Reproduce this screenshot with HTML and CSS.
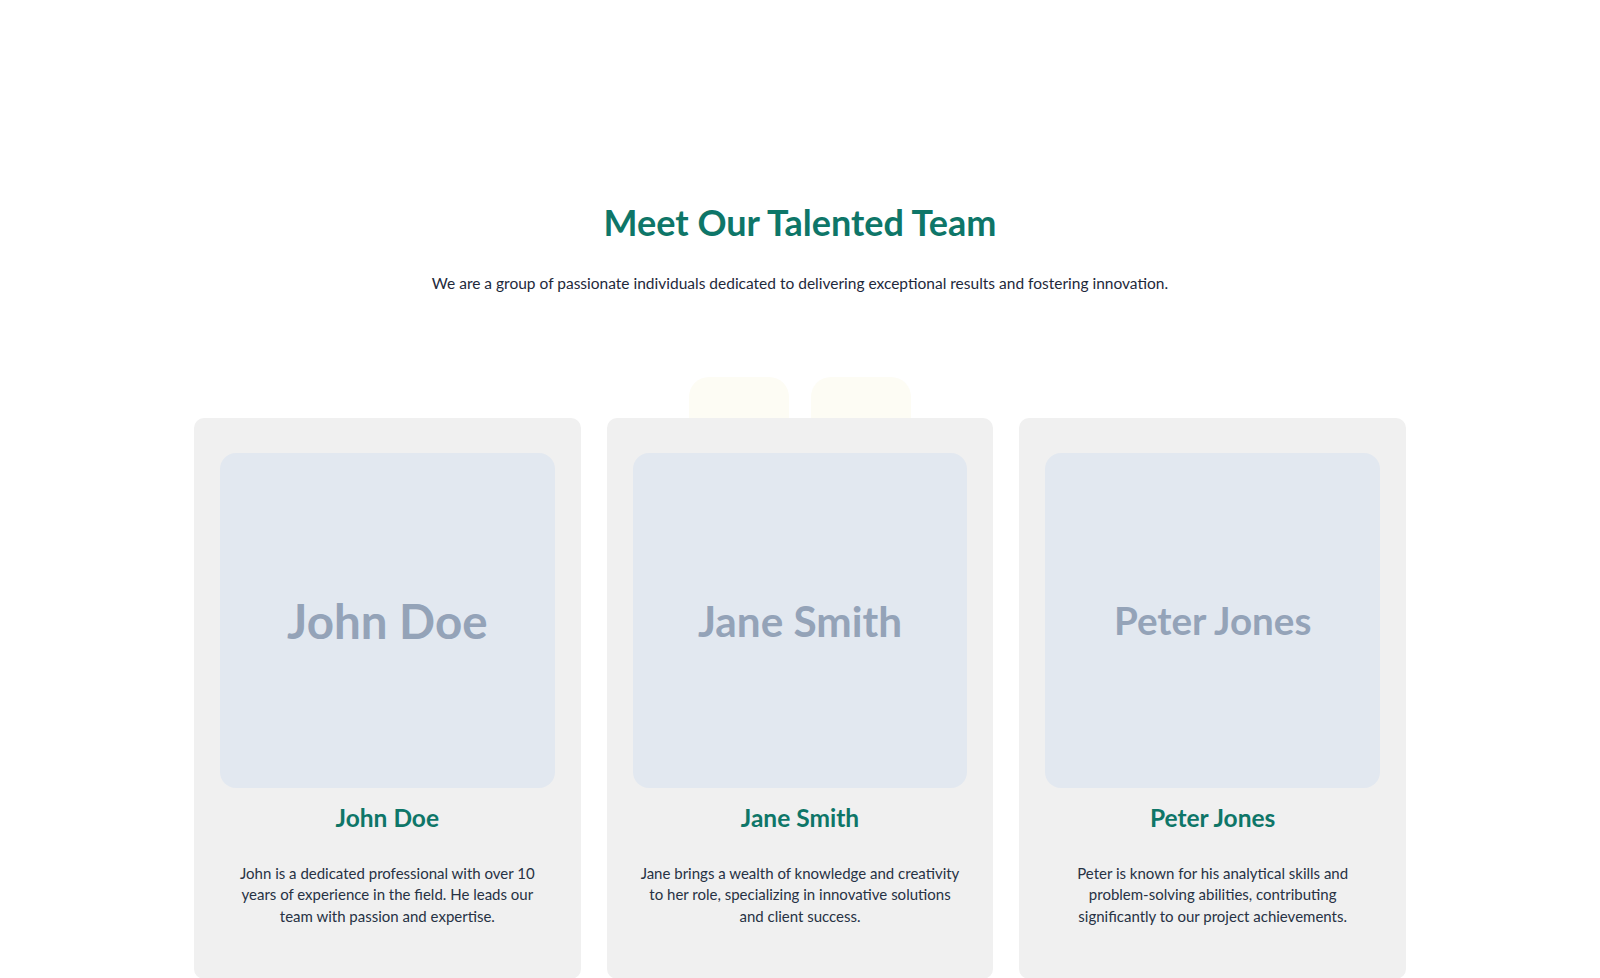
FILE: index.html
```html
<!DOCTYPE html>
<html lang="en">

<head>
  <meta charset="UTF-8">
  <meta name="viewport" content="width=device-width, initial-scale=1.0">
  <title>Our Team</title>
  <link rel="stylesheet" href="styles.css">
</head>

<body>
  <section class="team">
    <header class="team-header">
      <h1>Meet Our Talented Team</h1>
      <p>We are a group of passionate individuals dedicated to delivering exceptional results and fostering innovation.</p>
    </header>

    <div class="team-grid">
      <div class="blobs" aria-hidden="true">
        <span class="blob"></span>
        <span class="blob"></span>
      </div>

      <article class="member">
        <div class="photo"><span class="photo-label label-lg">John Doe</span></div>
        <h2>John Doe</h2>
        <p>John is a dedicated professional with over 10 years of experience in the field. He leads our team with passion and expertise.</p>
      </article>

      <article class="member">
        <div class="photo"><span class="photo-label label-md">Jane Smith</span></div>
        <h2>Jane Smith</h2>
        <p>Jane brings a wealth of knowledge and creativity to her role, specializing in innovative solutions and client success.</p>
      </article>

      <article class="member">
        <div class="photo"><span class="photo-label label-sm">Peter Jones</span></div>
        <h2>Peter Jones</h2>
        <p>Peter is known for his analytical skills and problem-solving abilities, contributing significantly to our project achievements.</p>
      </article>
    </div>
  </section>
</body>

</html>
```

FILE: styles.css
```css
body {
  margin: 0;
  background: #fff;
  color: #1e293b;
  font-family: Lato, "Noto Sans", sans-serif;
}

.team {
  max-inline-size: 1212px;
  margin-inline: auto;
  padding: 202px 0 0;
}

.team-header {
  text-align: center;
}

.team-header h1 {
  margin: 0;
  font-size: 36px;
  line-height: 40px;
  font-weight: 700;
  color: #0e7668;
}

.team-header p {
  margin: 29px 0 0;
  font-size: 15.5px;
  line-height: 24px;
}

.team-grid {
  position: relative;
  display: grid;
  grid-template-columns: repeat(3, 1fr);
  gap: 26px;
  margin-top: 123px;
}

/* soft decorative tiles peeking out above the middle of the grid */
.blobs {
  position: absolute;
  top: -41px;
  left: 50%;
  transform: translateX(-50%);
  display: flex;
  gap: 22px;
  z-index: 0;
}

.blob {
  inline-size: 100px;
  block-size: 120px;
  border-radius: 20px;
  background: #fdfcf4;
}

.member {
  position: relative;
  z-index: 1;
  background: #f0f0f0;
  border-radius: 10px;
  padding: 35px 26px 52px;
  text-align: center;
}

.photo {
  aspect-ratio: 1;
  display: flex;
  align-items: center;
  justify-content: center;
  background: #e2e8f0;
  border-radius: 16px;
}

.photo-label {
  font-family: Lato, sans-serif;
  font-weight: 700;
  color: #94a3b8;
}

.label-lg {
  font-size: 47.5px;
}

.label-md {
  font-size: 42.3px;
}

.label-sm {
  font-size: 38.6px;
}

.member h2 {
  margin: 14px 0 0;
  font-size: 24.5px;
  line-height: 32px;
  font-weight: 700;
  color: #0e7668;
}

.member p {
  margin: 29px 0 0;
  padding-inline: 4px;
  font-size: 15px;
  line-height: 21.6px;
  color: #273244;
}
```
